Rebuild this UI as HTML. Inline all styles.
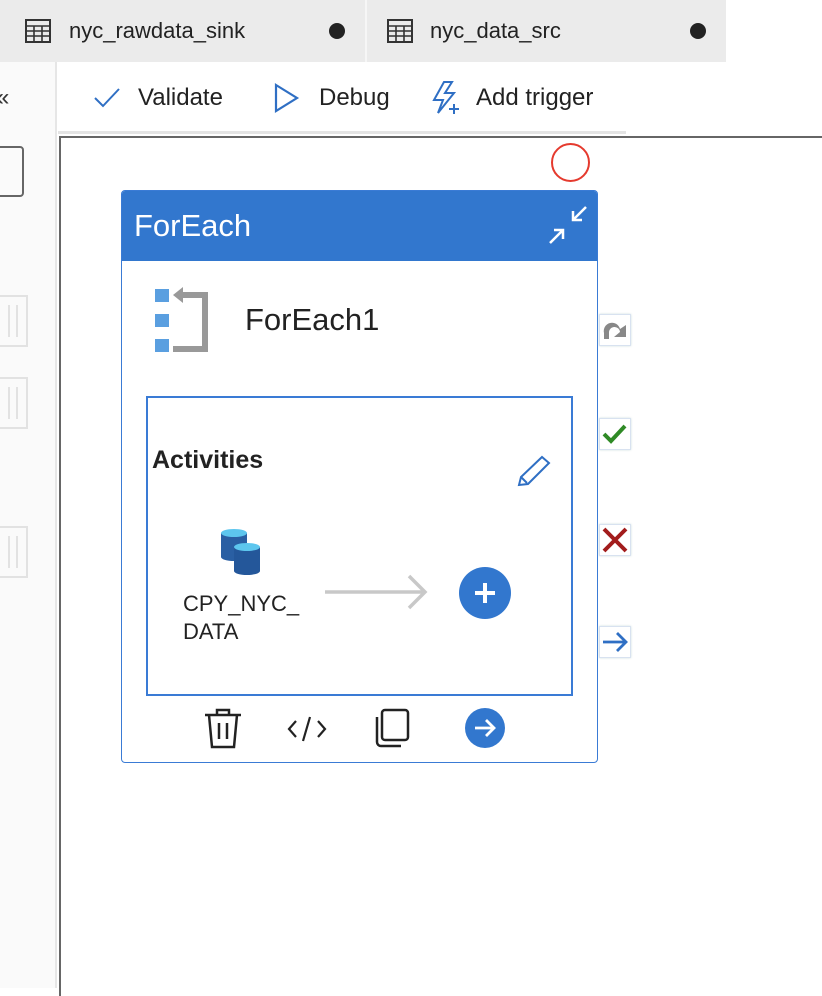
<!DOCTYPE html>
<html><head><style>
*{margin:0;padding:0;box-sizing:border-box}
body{width:822px;height:988px;background:#fff;position:relative;overflow:hidden;font-family:"Liberation Sans",sans-serif;color:#222}
.a{position:absolute}
.tab{position:absolute;top:0;height:62px;background:#ebebeb;font-size:22px;line-height:62px}
.sb{position:absolute;left:599px;width:32px;height:32px;border:1px solid #d8e2f0;background:#fff;box-shadow:0 0 2px #cdd}
.dh{position:absolute;left:-4px;width:32px;height:52px;border:2px solid #e2e2e2}
.dh:before,.dh:after{content:"";position:absolute;top:8px;height:32px;width:2px;background:#e2e2e2}
.dh:before{left:10px}.dh:after{left:18px}
</style></head><body>
<div class="a" style="left:0;top:0;width:726px;height:62px;background:#ebebeb"></div>
<div class="a" style="left:365px;top:0;width:2px;height:62px;background:#f6f6f6"></div>
<div class="tab" style="left:3px;width:362px">
<svg class="a" style="left:22px;top:19px" width="26" height="24" viewBox="0 0 26 24"><rect x="1" y="1" width="24" height="22" fill="none" stroke="#333" stroke-width="2"/><path d="M1 7H25M1 12H25M1 17H25M9 7V23M17 7V23" stroke="#333" stroke-width="1.6"/></svg>
<span class="a" style="left:66px;top:0">nyc_rawdata_sink</span>
<div class="a" style="left:326px;top:23px;width:16px;height:16px;border-radius:50%;background:#222"></div></div>
<div class="tab" style="left:367px;width:359px">
<svg class="a" style="left:20px;top:19px" width="26" height="24" viewBox="0 0 26 24"><rect x="1" y="1" width="24" height="22" fill="none" stroke="#333" stroke-width="2"/><path d="M1 7H25M1 12H25M1 17H25M9 7V23M17 7V23" stroke="#333" stroke-width="1.6"/></svg>
<span class="a" style="left:63px;top:0">nyc_data_src</span>
<div class="a" style="left:323px;top:23px;width:16px;height:16px;border-radius:50%;background:#222"></div></div>
<div class="a" style="left:0;top:62px;width:57px;height:926px;background:#fafafa;border-right:2px solid #e6e6e6"></div>
<div class="a" style="left:-4px;top:84px;font-size:24px;color:#333">«</div>
<div class="a" style="left:-10px;top:146px;width:34px;height:51px;border:2px solid #666;border-radius:4px"></div>
<div class="dh" style="top:295px"></div>
<div class="dh" style="top:377px"></div>
<div class="dh" style="top:526px"></div>
<div class="a" style="left:58px;top:131px;width:568px;height:3px;background:#e4e4e4"></div>
<svg class="a" style="left:93px;top:86px" width="28" height="24"><path d="M2 12L10 20L26 3" fill="none" stroke="#2f6fc4" stroke-width="2"/></svg>
<div class="a" style="left:138px;top:84px;font-size:24px">Validate</div>
<svg class="a" style="left:273px;top:82px" width="28" height="32"><path d="M3 3L24 16L3 29Z" fill="none" stroke="#2f6fc4" stroke-width="2.2"/></svg>
<div class="a" style="left:319px;top:84px;font-size:24px">Debug</div>
<svg class="a" style="left:430px;top:80px" width="34" height="36"><path d="M14 2L4 20H13L8 33L24 13H15L22 2Z" fill="none" stroke="#2f6fc4" stroke-width="2"/><path d="M24 24V34M19 29H29" stroke="#2f6fc4" stroke-width="2"/></svg>
<div class="a" style="left:476px;top:84px;font-size:24px">Add trigger</div>
<div class="a" style="left:59px;top:136px;width:770px;height:860px;border-left:2px solid #666;border-top:2px solid #666"></div>
<div class="a" style="left:551px;top:143px;width:39px;height:39px;border:2px solid #e53a2e;border-radius:50%"></div>
<div class="a" style="left:121px;top:190px;width:477px;height:573px;border:1.5px solid #3a7bd5;border-radius:4px;background:#fff;overflow:hidden">
<div class="a" style="left:0;top:0;width:100%;height:70px;background:#3277ce"></div>
<div class="a" style="left:12px;top:17px;font-size:31px;color:#fff">ForEach</div>
<svg class="a" style="left:424px;top:12px" width="44" height="44"><path d="M40 4L27 17M27 8V17H36M4 40L17 27M8 27H17V36" fill="none" stroke="#fff" stroke-width="2.5"/></svg>
</div>
<svg class="a" style="left:155px;top:287px" width="55" height="67"><rect x="0" y="2" width="14" height="13" fill="#5a9fe0"/><rect x="0" y="27" width="14" height="13" fill="#5a9fe0"/><rect x="0" y="52" width="14" height="13" fill="#5a9fe0"/><path d="M28 8H50V62H18" fill="none" stroke="#999" stroke-width="6"/><path d="M18 8L28 0V16Z" fill="#999"/></svg>
<div class="a" style="left:245px;top:302px;font-size:31px">ForEach1</div>
<div class="a" style="left:146px;top:396px;width:427px;height:300px;border:2px solid #3a7bd5"></div>
<div class="a" style="left:152px;top:446px;font-size:25px;font-weight:bold">Activities</div>
<svg class="a" style="left:515px;top:455px" width="36" height="34"><path d="M4 30L6 22L27 2L34 8L13 29Z M6 22L12 28" fill="none" stroke="#2f6fc4" stroke-width="2"/></svg>
<svg class="a" style="left:219px;top:529px" width="46" height="48"><path d="M2 4V28A13 4 0 0 0 28 28V4Z" fill="#2a5fa3"/><ellipse cx="15" cy="4" rx="13" ry="4" fill="#5dc6ee"/><path d="M15 18V42A13 4 0 0 0 41 42V18Z" fill="#24579a"/><ellipse cx="28" cy="18" rx="13" ry="4" fill="#5dc6ee"/></svg>
<div class="a" style="left:183px;top:590px;font-size:22px;line-height:28px">CPY_NYC_<br>DATA</div>
<svg class="a" style="left:324px;top:573px" width="106" height="38"><path d="M1 19H101M85 3L101 19L85 35" fill="none" stroke="#c8c8c8" stroke-width="3.5"/></svg>
<div class="a" style="left:459px;top:567px;width:52px;height:52px;border-radius:50%;background:#3277ce"></div>
<svg class="a" style="left:459px;top:567px" width="52" height="52"><path d="M26 16V36M16 26H36" stroke="#fff" stroke-width="4"/></svg>
<svg class="a" style="left:203px;top:707px" width="40" height="42"><path d="M2 8H38M14 8V3H26V8M6 8L9 40H31L34 8M16 16V32M24 16V32" fill="none" stroke="#222" stroke-width="2.5"/></svg>
<svg class="a" style="left:287px;top:715px" width="40" height="28"><path d="M9 6L2 14L9 22M31 6L38 14L31 22M23 2L16 26" fill="none" stroke="#222" stroke-width="2.2"/></svg>
<svg class="a" style="left:373px;top:708px" width="38" height="40"><rect x="9" y="2" width="26" height="30" rx="3" fill="none" stroke="#222" stroke-width="2.5"/><path d="M4 9V34A4 4 0 0 0 8 38H28" fill="none" stroke="#222" stroke-width="2.5"/></svg>
<div class="a" style="left:465px;top:708px;width:40px;height:40px;border-radius:50%;background:#3277ce"></div>
<svg class="a" style="left:465px;top:708px" width="40" height="40"><path d="M10 20H29M21 12L29 20L21 28" fill="none" stroke="#fff" stroke-width="2.8"/></svg>
<div class="sb" style="top:314px"><svg width="30" height="30"><path d="M4 24V18A8 8 0 0 1 20 14L26 10V22H14L20 17A5 5 0 0 0 9 18V24Z" fill="#888"/></svg></div>
<div class="sb" style="top:418px"><svg width="30" height="30"><path d="M4 15L11 22L25 7" fill="none" stroke="#2f8a25" stroke-width="4"/></svg></div>
<div class="sb" style="top:524px"><svg width="30" height="30"><path d="M4 4L26 26M26 4L4 26" stroke="#a21c1c" stroke-width="4"/></svg></div>
<div class="sb" style="top:626px"><svg width="30" height="30"><path d="M3 15H26M17 6L26 15L17 24" fill="none" stroke="#2f6fc4" stroke-width="2.8"/></svg></div>
</body></html>
